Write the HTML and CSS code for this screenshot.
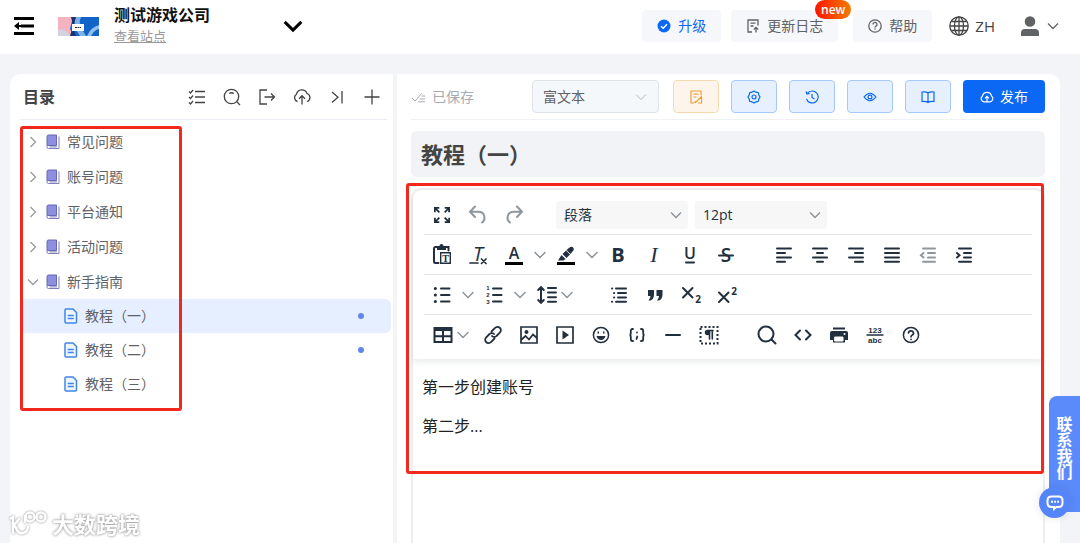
FILE: index.html
```html
<!DOCTYPE html>
<html lang="zh-CN">
<head>
    <meta charset="UTF-8">
    <meta name="viewport" content="width=device-width, initial-scale=1.0">
    <title>教程（一）</title>
    <link rel="stylesheet" href="styles.css">
</head>
<body>
    <!-- Shared icons -->
    <svg class="sprite" aria-hidden="true">
        <symbol id="chevron-down" viewBox="0 0 12 12"><path d="M1 3.5l5 5 5-5"/></symbol>
        <symbol id="chevron-right" viewBox="0 0 12 12"><path d="M3.5 1l5 5-5 5"/></symbol>
        <symbol id="book" viewBox="0 0 14 16">
            <path d="M2.500 1H10.500V11.500H1V2.500A1.500 1.500 0 0 1 2.500 1z" fill="#8f8fe0" stroke="#6568b4"/>
            <path d="M1 11.500V13A1.500 1.500 0 0 0 2.500 14.500H13V2.500" fill="none" stroke="#7d80bd"/>
            <path d="M3.500 12.900H11" fill="none" stroke="#7d80bd"/>
        </symbol>
        <symbol id="doc" viewBox="0 0 14 16">
            <path d="M2 1H9L12.500 4.500V14A1 1 0 0 1 11.500 15H2A1 1 0 0 1 1 14V2A1 1 0 0 1 2 1z" fill="#edf5ff" stroke="#4285e8" stroke-width="1.500"/>
            <path d="M3.700 7.500H9.800M3.700 10.500H9.800" fill="none" stroke="#4285e8" stroke-width="1.300"/>
        </symbol>
    </svg>

    <header class="topbar">
        <button class="icon-btn menu-toggle" aria-label="菜单">
            <svg width="20" height="18" viewBox="0 0 20 18"><path d="M0 1.500H20M7 9H20M0 16.500H20" stroke="#000" stroke-width="3"/><path d="M0 9L5 5V13zM4 8H8V10H4z"/></svg>
        </button>
        <svg class="site-logo" width="41" height="19" viewBox="0 0 41 19">
            <rect width="41" height="19" fill="#1264c8"/>
            <path d="M0 0H15L12 12L16 19H0z" fill="#f3b3c0"/>
            <path d="M13 0H20Q13 9 18 19H12Q16 8 13 0z" fill="#18356b"/>
            <path d="M18 0H23Q20 6 24 12L28 19H22Q14 9 18 0z" fill="#7fb0e6"/>
            <path d="M41 8Q33 10 29 19H33Q36 13 41 12z" fill="#8fc0ee"/>
            <path d="M0 13Q7 10 12 19H0z" fill="#d2d3de"/>
            <rect x="14" y="7" width="12" height="7" fill="#fff"/>
            <path d="M17 10.500H23" stroke="#333" stroke-dasharray="2 .500"/>
        </svg>
        <div class="site">
            <strong class="site-name">测试游戏公司</strong>
            <a class="site-link" href="#">查看站点</a>
        </div>
        <button class="icon-btn site-switch" aria-label="切换站点"><svg width="20" height="20"><use href="#chevron-down"/></svg></button>

        <nav class="topbar-actions">
            <button class="top-btn primary">
                <svg width="14" height="14" viewBox="0 0 14 14"><circle cx="7" cy="7" r="6.500" fill="#0a68f5"/><path d="M4 7.200L6.200 9.300L10 5.200" fill="none" stroke="#fff" stroke-width="1.400"/></svg>
                升级
            </button>
            <button class="top-btn changelog">
                <svg class="line" width="14" height="14" viewBox="0 0 14 14"><path d="M6 13H2V1H12V6.500M4.500 4.200H9.500M4.500 7H7.500M10 13.500V8.500M7.800 10.500L10 8.300L12.200 10.500"/></svg>
                更新日志
                <span class="badge">new</span>
            </button>
            <button class="top-btn">
                <svg class="line" width="14" height="14" viewBox="0 0 14 14"><circle cx="7" cy="7" r="6.200"/><path d="M5 5.500A2 2 0 1 1 7.700 7.300Q7 7.600 7 8.500M7 9.600V10.800"/></svg>
                帮助
            </button>
            <button class="icon-btn lang">
                <svg class="line" width="20" height="20" viewBox="0 0 20 20"><circle cx="10" cy="10" r="9.200"/><ellipse cx="10" cy="10" rx="4.500" ry="9.200"/><path d="M10 1V19M1 10H19M2.500 5.500H17.500M2.500 14.500H17.500"/></svg>
                ZH
            </button>
            <button class="icon-btn user" aria-label="用户">
                <svg width="20" height="20" viewBox="0 0 20 20" fill="#606266"><circle cx="10" cy="5.500" r="5.300"/><path d="M1 20V17Q1 13 5 13H15Q19 13 19 17V20z"/></svg>
                <svg class="line" width="12" height="12"><use href="#chevron-down"/></svg>
            </button>
        </nav>
    </header>

    <main class="layout">
        <aside class="catalog">
            <div class="catalog-head">
                <h2>目录</h2>
                <div class="catalog-tools">
                    <button class="icon-btn" aria-label="多选"><svg class="line" width="18" height="18" viewBox="0 0 18 18"><path d="M7 3.500H17M7 9H17M7 14.500H17M1 3.500L2.500 5L5 2M1 9L2.500 10.500L5 7.500M1 14.500L2.500 16L5 13"/></svg></button>
                    <button class="icon-btn" aria-label="搜索"><svg class="line" width="18" height="18" viewBox="0 0 18 18"><circle cx="8.500" cy="8.500" r="7.200"/><path d="M13.800 13.800L17 17M6.200 5.500Q8.500 4 10.800 5.500"/></svg></button>
                    <button class="icon-btn" aria-label="导出"><svg class="line" width="18" height="18" viewBox="0 0 18 18"><path d="M9 2H2V16H9M6.500 9H16.500M13 5.500L16.500 9L13 12.500"/></svg></button>
                    <button class="icon-btn" aria-label="上传"><svg class="line" width="18" height="18" viewBox="0 0 18 18"><path d="M4.500 13.500A4 4 0 0 1 3.500 6.200A5.500 5.500 0 0 1 14 5.500A4.200 4.200 0 0 1 14 13.500M9 16.500V8M6 10.700L9 7.700L12 10.700"/></svg></button>
                    <button class="icon-btn" aria-label="收起"><svg class="line" width="18" height="18" viewBox="0 0 18 18"><path d="M4 4L10 9.200L4 14.500M14 3V15.500"/></svg></button>
                    <button class="icon-btn" aria-label="新增"><svg class="line" width="18" height="18" viewBox="0 0 18 18"><path d="M9 1.500V16.500M1.500 9H16.500"/></svg></button>
                </div>
            </div>
            <div class="tree">
                <ul class="folders">
                    <li><a class="folder" href="#"><svg class="arrow"><use href="#chevron-right"/></svg><svg class="node-icon"><use href="#book"/></svg>常见问题</a></li>
                    <li><a class="folder" href="#"><svg class="arrow"><use href="#chevron-right"/></svg><svg class="node-icon"><use href="#book"/></svg>账号问题</a></li>
                    <li><a class="folder" href="#"><svg class="arrow"><use href="#chevron-right"/></svg><svg class="node-icon"><use href="#book"/></svg>平台通知</a></li>
                    <li><a class="folder" href="#"><svg class="arrow"><use href="#chevron-right"/></svg><svg class="node-icon"><use href="#book"/></svg>活动问题</a></li>
                    <li>
                        <a class="folder" href="#"><svg class="arrow"><use href="#chevron-down"/></svg><svg class="node-icon"><use href="#book"/></svg>新手指南</a>
                        <ul class="pages">
                            <li><a class="page selected" href="#"><svg class="node-icon"><use href="#doc"/></svg>教程（一）<span class="dot"></span></a></li>
                            <li><a class="page" href="#"><svg class="node-icon"><use href="#doc"/></svg>教程（二）<span class="dot"></span></a></li>
                            <li><a class="page" href="#"><svg class="node-icon"><use href="#doc"/></svg>教程（三）</a></li>
                        </ul>
                    </li>
                </ul>
                <div class="mark mark-tree"></div>
            </div>
        </aside>

        <section class="document">
            <div class="doc-bar">
                <span class="saved"><svg width="15" height="12" viewBox="0 0 15 12"><path d="M1 7L4 10L11 2M10.500 5H14M8.500 8H14M7 10.800H14"/></svg>已保存</span>
                <div class="doc-actions">
                    <div class="select mode">
                        <select aria-label="编辑模式"><option>富文本</option></select>
                        <svg><use href="#chevron-down"/></svg>
                    </div>
                    <button class="act warn" aria-label="草稿"><svg viewBox="0 0 14 14"><path d="M5 13H2V1H12V5M4.500 4.200H9.500M4.500 7H7.500M6 13L12.500 6.500V13H9M6 13V11"/></svg></button>
                    <button class="act" aria-label="设置"><svg viewBox="0 0 14 14"><path d="M7 1L9 2.200L11.300 2.700L11.800 5L13 7L11.800 9L11.300 11.300L9 11.800L7 13L5 11.800L2.700 11.300L2.200 9L1 7L2.200 5L2.700 2.700L5 2.200z"/><circle cx="7" cy="7" r="2"/></svg></button>
                    <button class="act" aria-label="历史"><svg viewBox="0 0 14 14"><path d="M1.500 9A6 6 0 1 0 2.500 3.200M1 1.500L2 4L4.700 3.500M7 4V7.500L9.500 9"/></svg></button>
                    <button class="act" aria-label="预览"><svg viewBox="0 0 14 14"><path d="M1 7Q7 -0.500 13 7Q7 14.500 1 7z"/><circle cx="7" cy="7" r="1.900"/></svg></button>
                    <button class="act" aria-label="阅读"><svg viewBox="0 0 14 14"><path d="M7 3Q5.500 1.700 1 2V11.500Q5.500 11.300 7 12.500Q8.500 11.300 13 11.500V2Q8.500 1.700 7 3zM7 3V12.500"/></svg></button>
                    <button class="act publish"><svg viewBox="0 0 14 14"><path d="M4 11.800A3.200 3.200 0 0 1 2.500 6A4.600 4.600 0 0 1 11.500 6A3.200 3.200 0 0 1 10 11.800zM7 11.500V6.500M5 8.300L7 6.300L9 8.300"/></svg>发布</button>
                </div>
            </div>
            <input class="doc-title" type="text" value="教程（一）" aria-label="标题">

            <div class="editor">
                <div class="toolbar">
                    <div class="tool-row">
                        <div class="group">
                            <button aria-label="全屏"><svg viewBox="0 0 24 24"><path class="solid" d="M15.300 10l-1.200-1.300 2.900-3h-2.300V4H20v5.300h-1.800V7zM15.300 14l3 3v-2.300H20V20h-5.300v-1.800H17l-3-2.900zM10 15.300l-2.900 3h2.200V20H4v-5.300h1.800V17l2.900-3zM8.700 10l-3-3v2.300H4V4h5.300v1.800H7l3 2.900z"/></svg></button>
                            <button disabled aria-label="撤销"><svg viewBox="0 0 24 24"><path d="M9 3.500L4 8.800L9 14M4.500 8.800H12C20 8.800 19.500 17.500 16 19.500"/></svg></button>
                            <button disabled aria-label="重做"><svg viewBox="0 0 24 24"><path d="M15 3.500L20 8.800L15 14M19.500 8.800H12C4 8.800 4.500 17.500 8 19.500"/></svg></button>
                        </div>
                        <div class="group fields">
                            <div class="select"><select aria-label="段落格式"><option>段落</option></select><svg><use href="#chevron-down"/></svg></div>
                            <div class="select"><select aria-label="字号"><option>12pt</option></select><svg><use href="#chevron-down"/></svg></div>
                        </div>
                    </div>

                    <div class="tool-row">
                        <div class="group">
                            <button aria-label="粘贴为文本"><svg viewBox="0 0 24 24"><path d="M8.500 20H5.500A1.500 1.500 0 0 1 4 18.500V5.500A1.500 1.500 0 0 1 5.500 4H18.500V7.500"/><path d="M10.700 9.700H20.300V20.300H10.700z" stroke-width="1.400"/><path class="solid" d="M7 3H9.500A2 2 0 0 1 13.500 3H16V7H7z"/><text class="paste-t" x="15.500" y="18.500">T</text></svg></button>
                            <button aria-label="清除格式"><svg viewBox="0 0 24 24"><text class="clear-t" x="12" y="18">T</text><path d="M4 20H12M15.500 16L20 20.500M20 16L15.500 20.500" stroke-width="1.700"/></svg></button>
                            <button aria-label="文字颜色"><svg viewBox="0 0 24 24"><text class="color-t" x="12" y="16">A</text><path class="swatch" d="M3 20.500H21"/></svg></button>
                            <button class="chev" aria-label="更多颜色"><svg><use href="#chevron-down"/></svg></button>
                            <button aria-label="背景颜色"><svg viewBox="0 0 24 24"><path class="solid" d="M4 17.500L7.500 12L11.500 16L9.500 17.500zM8.500 11L12 7.500L16 11.500L12.500 15zM12.500 7L15.500 4.500Q18 3 19.500 5Q20.500 7 18.500 8.500L16.500 11z"/><path class="swatch" d="M3 20.500H21"/></svg></button>
                            <button class="chev" aria-label="更多背景颜色"><svg><use href="#chevron-down"/></svg></button>
                            <button aria-label="粗体"><svg viewBox="0 0 24 24"><text class="bold-t" x="12" y="19">B</text></svg></button>
                            <button aria-label="斜体"><svg viewBox="0 0 24 24"><text class="italic-t" x="12" y="19">I</text></svg></button>
                            <button aria-label="下划线"><svg viewBox="0 0 24 24"><text class="under-t" x="12" y="16">U</text><path d="M8 19.500H16"/></svg></button>
                            <button aria-label="删除线"><svg viewBox="0 0 24 24"><text class="strike-t" x="12" y="19">S</text><path d="M5 12.500H19"/></svg></button>
                        </div>
                        <div class="group">
                            <button aria-label="左对齐"><svg viewBox="0 0 24 24"><path d="M5 5.500H19M5 10H13M5 14.500H19M5 18.800H13"/></svg></button>
                            <button aria-label="居中"><svg viewBox="0 0 24 24"><path d="M5 5.500H19M9 10H15M5 14.500H19M9 18.800H15"/></svg></button>
                            <button aria-label="右对齐"><svg viewBox="0 0 24 24"><path d="M5 5.500H19M11 10H19M5 14.500H19M11 18.800H19"/></svg></button>
                            <button aria-label="两端对齐"><svg viewBox="0 0 24 24"><path d="M5 5.500H19M5 10H19M5 14.500H19M5 18.800H19"/></svg></button>
                            <button disabled aria-label="减少缩进"><svg viewBox="0 0 24 24"><path d="M7 5.500H19M12 10H19M12 14.500H19M7 18.800H19M7.500 10L5 12.200L7.500 14.500"/></svg></button>
                            <button aria-label="增加缩进"><svg viewBox="0 0 24 24"><path d="M7 5.500H19M12 10H19M12 14.500H19M7 18.800H19M5 10L7.500 12.200L5 14.500"/></svg></button>
                        </div>
                    </div>

                    <div class="tool-row">
                        <div class="group">
                            <button aria-label="项目符号"><svg viewBox="0 0 24 24"><path d="M11 5.500H19.500M11 12H19.500M11 18.500H19.500"/><path d="M5.300 5.500H5.400M5.300 12H5.400M5.300 18.500H5.400" stroke-width="3"/></svg></button>
                            <button class="chev" aria-label="项目符号样式"><svg><use href="#chevron-down"/></svg></button>
                            <button aria-label="编号"><svg viewBox="0 0 24 24"><path d="M11 5.500H19.500M11 12H19.500M11 18.500H19.500"/><text class="num-t" x="6" y="7">1</text><text class="num-t" x="6" y="14">2</text><text class="num-t" x="6" y="21">3</text></svg></button>
                            <button class="chev" aria-label="编号样式"><svg><use href="#chevron-down"/></svg></button>
                            <button class="menu" aria-label="行高"><svg viewBox="0 0 24 24"><path d="M13 5H21M13 9.500H21M13 14.200H21M13 18.800H21M6 4.500V19.500M3.200 7L6 4.200L8.800 7M3.200 17L6 19.800L8.800 17"/></svg><svg><use href="#chevron-down"/></svg></button>
                        </div>
                        <div class="group">
                            <button aria-label="首行缩进"><svg viewBox="0 0 24 24"><path d="M9 5.500H19M11 10H19M11 14.500H19M9 18.800H19M5 5.500H5.200M7 10H7.200M7 14.500H7.200M5 18.800H5.200"/></svg></button>
                            <button aria-label="引用"><svg viewBox="0 0 24 24"><path class="solid" d="M5 7H11V12Q10.500 16.500 7.500 17.500H5.500Q7.500 15.500 7.500 13H5zM13.500 7H19.500V12Q19 16.500 16 17.500H14Q16 15.500 16 13H13.500z"/></svg></button>
                            <button aria-label="下标"><svg viewBox="0 0 24 24"><path d="M4 5L13.500 14.500M13.500 5L4 14.500"/><text class="sub-t" x="19" y="20">2</text></svg></button>
                            <button aria-label="上标"><svg viewBox="0 0 24 24"><path d="M4 9.500L13.500 19M13.500 9.500L4 19"/><text class="sub-t" x="19" y="12">2</text></svg></button>
                        </div>
                    </div>

                    <div class="tool-row">
                        <div class="group">
                            <button class="menu" aria-label="表格"><svg viewBox="0 0 24 24"><path d="M3.500 5H20.500V19H3.500zM3.500 7H20.500M12 7V19M3.500 13.200H20.500"/></svg><svg><use href="#chevron-down"/></svg></button>
                            <button aria-label="链接"><svg viewBox="0 0 24 24"><path d="M10.500 8.500L14 5A3.100 3.100 0 0 1 19 9.500L15.500 13A3.100 3.100 0 0 1 11 13M13.500 15.500L10 19A3.100 3.100 0 0 1 5 14.500L8.500 11A3.100 3.100 0 0 1 13 11" stroke-width="1.800"/></svg></button>
                            <button aria-label="图片"><svg viewBox="0 0 24 24"><path d="M4 4H20V20H4zM4 17L8.500 13L12 16.500L16 11.500L20 15" stroke-width="1.700"/><circle class="solid" cx="9.500" cy="9" r="2"/></svg></button>
                            <button aria-label="媒体"><svg viewBox="0 0 24 24"><path d="M4 4H20V20H4z" stroke-width="1.700"/><path class="solid" d="M9.500 7.500L16 12L9.500 16.500z"/></svg></button>
                            <button aria-label="表情"><svg viewBox="0 0 24 24"><circle cx="12" cy="12" r="7.600" stroke-width="1.500"/><path class="solid" d="M7.500 13H16.500Q15.500 17 12 17Q8.500 17 7.500 13zM8.500 8.500H10V10.500H8.500zM14 8.500H15.500V10.500H14z"/></svg></button>
                            <button aria-label="代码示例"><svg viewBox="0 0 24 24"><path d="M8 6H7.500Q5.800 6 5.800 8V10Q5.800 12 4.500 12Q5.800 12 5.800 14V16Q5.800 18 7.500 18H8M16 6H16.500Q18.200 6 18.200 8V10Q18.200 12 19.500 12Q18.200 12 18.200 14V16Q18.200 18 16.500 18H16M12 9.500V9.600M12.300 13.500L11.500 16" stroke-width="1.800"/></svg></button>
                            <button aria-label="分割线"><svg viewBox="0 0 24 24"><path d="M5 12H19"/></svg></button>
                            <button aria-label="显示区块"><svg viewBox="0 0 24 24"><path class="dashed" d="M3.500 4H20.500V20.500H3.500z"/><path d="M12.500 8V16M15.300 8V16M16 7.500H11" stroke-width="1.600"/><circle class="solid" cx="10.500" cy="9.500" r="2.700"/></svg></button>
                        </div>
                        <div class="group">
                            <button aria-label="查找"><svg viewBox="0 0 24 24"><circle cx="11" cy="11" r="7.500"/><path d="M16.500 16.500L20.500 20.500"/></svg></button>
                            <button aria-label="源代码"><svg viewBox="0 0 24 24"><path d="M9 7.500L4.500 12L9 16.500M15 7.500L19.500 12L15 16.500"/></svg></button>
                            <button aria-label="打印"><svg viewBox="0 0 24 24"><path class="solid" d="M6 4.500H18V6.500H6zM5 8H19Q21 8 21 10V17H18V19.500H6V17H3V10Q3 8 5 8z"/><path d="M8 14H16V18H8z" fill="#fff" stroke="#fff" stroke-width="1"/><circle cx="17.500" cy="11" r="1" fill="#fff" stroke="none"/></svg></button>
                            <button aria-label="字数统计"><svg viewBox="0 0 24 24"><text class="count-t" x="12" y="10">123</text><path d="M4 12H20" stroke-width="1.300"/><text class="count-t" x="12" y="20">abc</text></svg></button>
                            <button aria-label="帮助"><svg viewBox="0 0 24 24"><path d="M9.500 10A2.500 2.300 0 1 1 13 12.200Q12 12.700 12 13.800M12 16.300V16.400" stroke-width="1.700"/><circle cx="12" cy="12" r="7.600" stroke-width="1.500"/></svg></button>
                        </div>
                    </div>
                </div>
                <div class="content" contenteditable="true">
                    <p>第一步创建账号</p>
                    <p>第二步...</p>
                </div>
                <div class="mark mark-editor"></div>
            </div>
        </section>
    </main>

    <div class="contact">
        <button class="contact-tab">联系我们</button>
        <button class="contact-chat" aria-label="在线客服"><svg width="18" height="18" viewBox="0 0 18 18"><path d="M5.500 2.500H12.500Q16.500 2.500 16.500 6.500V9Q16.500 13 12.500 13H10.500L8 15V13H5.500Q1.500 13 1.500 9V6.500Q1.500 2.500 5.500 2.500z" fill="none" stroke="#fff" stroke-width="2"/><path d="M5 7.800H7M8.200 7.800H10M11.200 7.800H13" stroke="#fff" stroke-width="2"/></svg></button>
    </div>

    <div class="watermark">
        <svg width="40" height="28" viewBox="0 0 40 28"><path d="M2 9L5 7V24M12 8L6 15L9 19M8 18Q10 24 15 23Q20 22 20 16M17 13V5"/><circle cx="22" cy="7" r="4.500"/><circle cx="33" cy="7" r="4.500"/></svg>
        <span>大数跨境</span>
    </div>
</body>
</html>
```
FILE: styles.css
```css
* {
    box-sizing: border-box;
}

body {
    display: flex;
    flex-direction: column;
    height: 100vh;
    margin: 0;
    overflow: hidden;
    background-color: #f2f4f8;
    color: #606266;
    font-family: "Open Sans", "Noto Sans CJK SC", sans-serif;
    font-size: 14px;
    line-height: 20px;
}

button, input, select {
    font: inherit;
    color: inherit;
}

button {
    display: flex;
    align-items: center;
    justify-content: center;
    padding: 0;
    border: none;
    background: none;
    cursor: pointer;
}

a {
    color: inherit;
    text-decoration: none;
}

ul {
    margin: 0;
    padding: 0;
    list-style: none;
}

svg {
    flex: none;
}

symbol path {
    vector-effect: non-scaling-stroke;
}

.sprite {
    position: absolute;
    width: 0;
    height: 0;
}

.line {
    fill: none;
    stroke: currentColor;
    stroke-width: 1.3;
}

/* Top bar */
.topbar {
    display: flex;
    flex: none;
    align-items: center;
    height: 54px;
    padding: 0 21px 2px 14px;
    background-color: #fff;
}

.site-logo {
    margin-left: 24px;
}

.site {
    display: flex;
    flex-direction: column;
    width: 169px;
    margin-left: 15px;
    padding-bottom: 2px;
}

.site-name {
    color: #111;
    font-size: 16px;
    line-height: 22px;
}

.site-link {
    color: #999;
    font-size: 13px;
    text-decoration: underline;
}

.site-switch {
    fill: none;
    stroke: #000;
    stroke-width: 3;
}

.topbar-actions {
    display: flex;
    align-items: center;
    margin-left: auto;
}

.top-btn {
    position: relative;
    gap: 7px;
    height: 32px;
    margin-right: 10px;
    padding: 0 15px;
    border-radius: 4px;
    background-color: #f5f7fa;
}

.top-btn.primary {
    color: #0a68f5;
}

.top-btn.changelog {
    margin-right: 15px;
}

.badge {
    position: absolute;
    top: -10px;
    right: -13px;
    padding: 0 6px;
    border-radius: 10px;
    background: linear-gradient(90deg, #ff1500, #f37a00);
    color: #fff;
    font-size: 12px;
    font-weight: 600;
    line-height: 19px;
}

.lang {
    gap: 6px;
    margin-left: 7px;
    color: #444;
    font-size: 15px;
}

.user {
    gap: 7px;
    margin-left: 25px;
}

/* Panels */
.layout {
    display: flex;
    flex: 1;
    gap: 4px;
    min-height: 0;
    padding: 20px 20px 0 10px;
}

.catalog {
    flex: none;
    width: 383px;
    padding: 0 2px 0 10px;
    border-radius: 10px 0 0 0;
    background-color: #fff;
}

.catalog-head {
    display: flex;
    align-items: center;
    justify-content: space-between;
    height: 46px;
    margin-right: 4px;
    padding: 0 6px 0 3px;
    border-bottom: 1px solid #ebeef5;
}

.catalog-head h2 {
    margin: 0;
    color: #444;
    font-size: 16px;
}

.catalog-tools {
    display: flex;
    gap: 17px;
    color: #444;
}

.tree {
    position: relative;
    padding-top: 4px;
}

.folder, .page {
    display: flex;
    align-items: center;
}

.folder {
    height: 35px;
    padding-left: 7px;
}

.page {
    height: 34px;
    padding: 0 27px 0 44px;
    border-radius: 6px;
}

.page.selected {
    background-color: #e6efff;
}

.arrow {
    width: 12px;
    height: 12px;
    margin-right: 7px;
    fill: none;
    stroke: #999;
    stroke-width: 1.3;
}

.node-icon {
    width: 14px;
    height: 16px;
    margin-right: 7px;
}

.dot {
    width: 6px;
    height: 6px;
    margin-left: auto;
    border-radius: 50%;
    background-color: #6286e6;
}

/* Document */
.document {
    display: flex;
    flex: 1;
    flex-direction: column;
    min-width: 0;
    padding: 0 15px 0 14px;
    border-radius: 0 10px 0 0;
    background-color: #fff;
}

.doc-bar {
    display: flex;
    flex: none;
    align-items: center;
    justify-content: space-between;
    height: 46px;
    border-bottom: 1px solid #f0f1f4;
}

.saved {
    display: flex;
    align-items: center;
    gap: 6px;
    color: #a8abb2;
}

.saved svg {
    fill: none;
    stroke: currentColor;
}

.doc-actions {
    display: flex;
    gap: 12px;
}

.select {
    position: relative;
}

.select select {
    width: 100%;
    height: 100%;
    padding: 0 8px;
    border: none;
    border-radius: 3px;
    background-color: #f7f7f7;
    color: #222f3e;
    appearance: none;
}

.select svg {
    position: absolute;
    top: calc(50% - 6px);
    right: 6px;
    width: 12px;
    height: 12px;
    fill: none;
    stroke: #8d939a;
    stroke-width: 1.5;
    pointer-events: none;
}

.mode {
    width: 127px;
    height: 33px;
    margin-right: 2px;
}

.mode select {
    padding: 0 10px;
    border: 1px solid #dfe3ea;
    border-radius: 4px;
    background-color: #f5f8fb;
    color: #606266;
}

.mode svg {
    right: 12px;
    stroke: #b4b8bf;
    stroke-width: 1;
}

.act {
    width: 46px;
    height: 33px;
    border: 1px solid #a6c8fb;
    border-radius: 4px;
    background-color: #e6f0fe;
    color: #0a68f5;
}

.act svg {
    width: 14px;
    height: 14px;
    fill: none;
    stroke: currentColor;
    stroke-width: 1.2;
}

.act.warn {
    border-color: #f7d9ae;
    background-color: #fdf5ec;
    color: #e8a13c;
}

.act.publish {
    gap: 6px;
    width: 82px;
    border: none;
    background-color: #0a68f5;
    color: #fff;
}

.doc-title {
    flex: none;
    width: 100%;
    height: 46px;
    margin: 11px 0;
    padding: 0 10px 2px;
    border: none;
    border-radius: 6px;
    background-color: #f2f3f6;
    color: #444;
    font-size: 22px;
    font-weight: 700;
}

/* Editor */
.editor {
    position: relative;
    flex: 1;
    border: 2px solid #eee;
    border-bottom: none;
    border-radius: 10px 10px 0 0;
    background-color: #fff;
}

.toolbar {
    padding: 5px 11px 4px;
    border-radius: 10px 10px 0 0;
    box-shadow: 0 3px 6px rgba(34, 47, 62, 0.1);
}

.tool-row {
    display: flex;
    align-items: center;
    gap: 22px;
    height: 40px;
    border-bottom: 1px solid #e3e3e3;
}

.tool-row:last-child {
    border-bottom: none;
}

.group {
    display: flex;
}

.group button {
    width: 36px;
    height: 28px;
    fill: none;
    stroke: #222f3e;
    stroke-linecap: round;
    stroke-width: 2;
}

.group button svg {
    width: 24px;
    height: 24px;
    overflow: visible;
}

.group button:disabled {
    opacity: 0.5;
}

.group button.chev {
    width: 16px;
}

.group button.chev svg,
.group button.menu svg + svg {
    width: 12px;
    height: 12px;
    stroke: #8d939a;
    stroke-width: 1.5;
}

.group button.menu {
    gap: 2px;
    width: 51px;
}

.group .solid {
    fill: #222f3e;
    stroke: none;
}

.group .swatch {
    stroke: #000;
    stroke-linecap: butt;
    stroke-width: 3;
}

.group .dashed {
    stroke-dasharray: 2 2;
    stroke-linecap: butt;
}

.group text {
    fill: #222f3e;
    stroke: none;
    font-family: "Open Sans", sans-serif;
    font-weight: 700;
    text-anchor: middle;
}

.group .paste-t {
    font-family: "Liberation Serif", serif;
    font-size: 10px;
}

.group .clear-t {
    font-size: 20px;
    font-style: italic;
    font-weight: 400;
}

.group .color-t {
    font-size: 16px;
    font-weight: 600;
}

.group .bold-t {
    font-size: 20px;
}

.group .italic-t {
    font-family: "Liberation Serif", serif;
    font-size: 22px;
    font-style: italic;
    font-weight: 400;
}

.group .under-t {
    font-size: 16px;
    font-weight: 600;
}

.group .strike-t {
    font-size: 19px;
    font-weight: 600;
}

.group .num-t {
    font-family: "Liberation Sans", sans-serif;
    font-size: 6px;
}

.group .sub-t {
    font-size: 10px;
}

.group .count-t {
    font-family: "Liberation Sans", sans-serif;
    font-size: 8px;
}

.fields {
    gap: 7px;
    padding-left: 2px;
}

.fields .select {
    width: 132px;
    height: 28px;
}

.content {
    padding: 16px 9px;
    outline: none;
    color: #222;
    font-size: 16px;
    line-height: 24px;
}

.content p {
    margin: 0 0 15px;
}

/* Highlight frames */
.mark {
    position: absolute;
    border: 3px solid #f0281e;
    border-radius: 3px;
    pointer-events: none;
}

.mark-tree {
    top: 6px;
    bottom: -10px;
    left: 0;
    width: 162px;
}

.mark-editor {
    top: -7px;
    right: -1px;
    left: -7px;
    height: 291px;
}

/* Contact widget */
.contact {
    position: fixed;
    right: 0;
    bottom: 31px;
}

.contact-tab {
    width: 31px;
    height: 116px;
    padding-bottom: 12px;
    border-radius: 8px 0 0 8px;
    background-color: #5b8bfa;
    color: #fff;
    font-family: "Noto Sans CJK SC", sans-serif;
    font-size: 16px;
    font-weight: 700;
    writing-mode: vertical-rl;
}

.contact-chat {
    position: absolute;
    right: 10px;
    bottom: -6px;
    width: 31px;
    height: 31px;
    border-radius: 50%;
    background-color: #5585fa;
    box-shadow: 0 0 10px rgba(0, 0, 0, 0.1);
}

/* Watermark */
.watermark {
    position: fixed;
    bottom: 5px;
    left: 8px;
    display: flex;
    align-items: center;
    gap: 4px;
    color: #fff;
    font-size: 22px;
    font-weight: 700;
    line-height: 28px;
    text-shadow: 0 0 3px #999, 0 0 2px #aaa;
    pointer-events: none;
}

.watermark svg {
    fill: none;
    stroke: #fff;
    stroke-width: 2.5;
    filter: drop-shadow(0 0 1px #888);
}
```
